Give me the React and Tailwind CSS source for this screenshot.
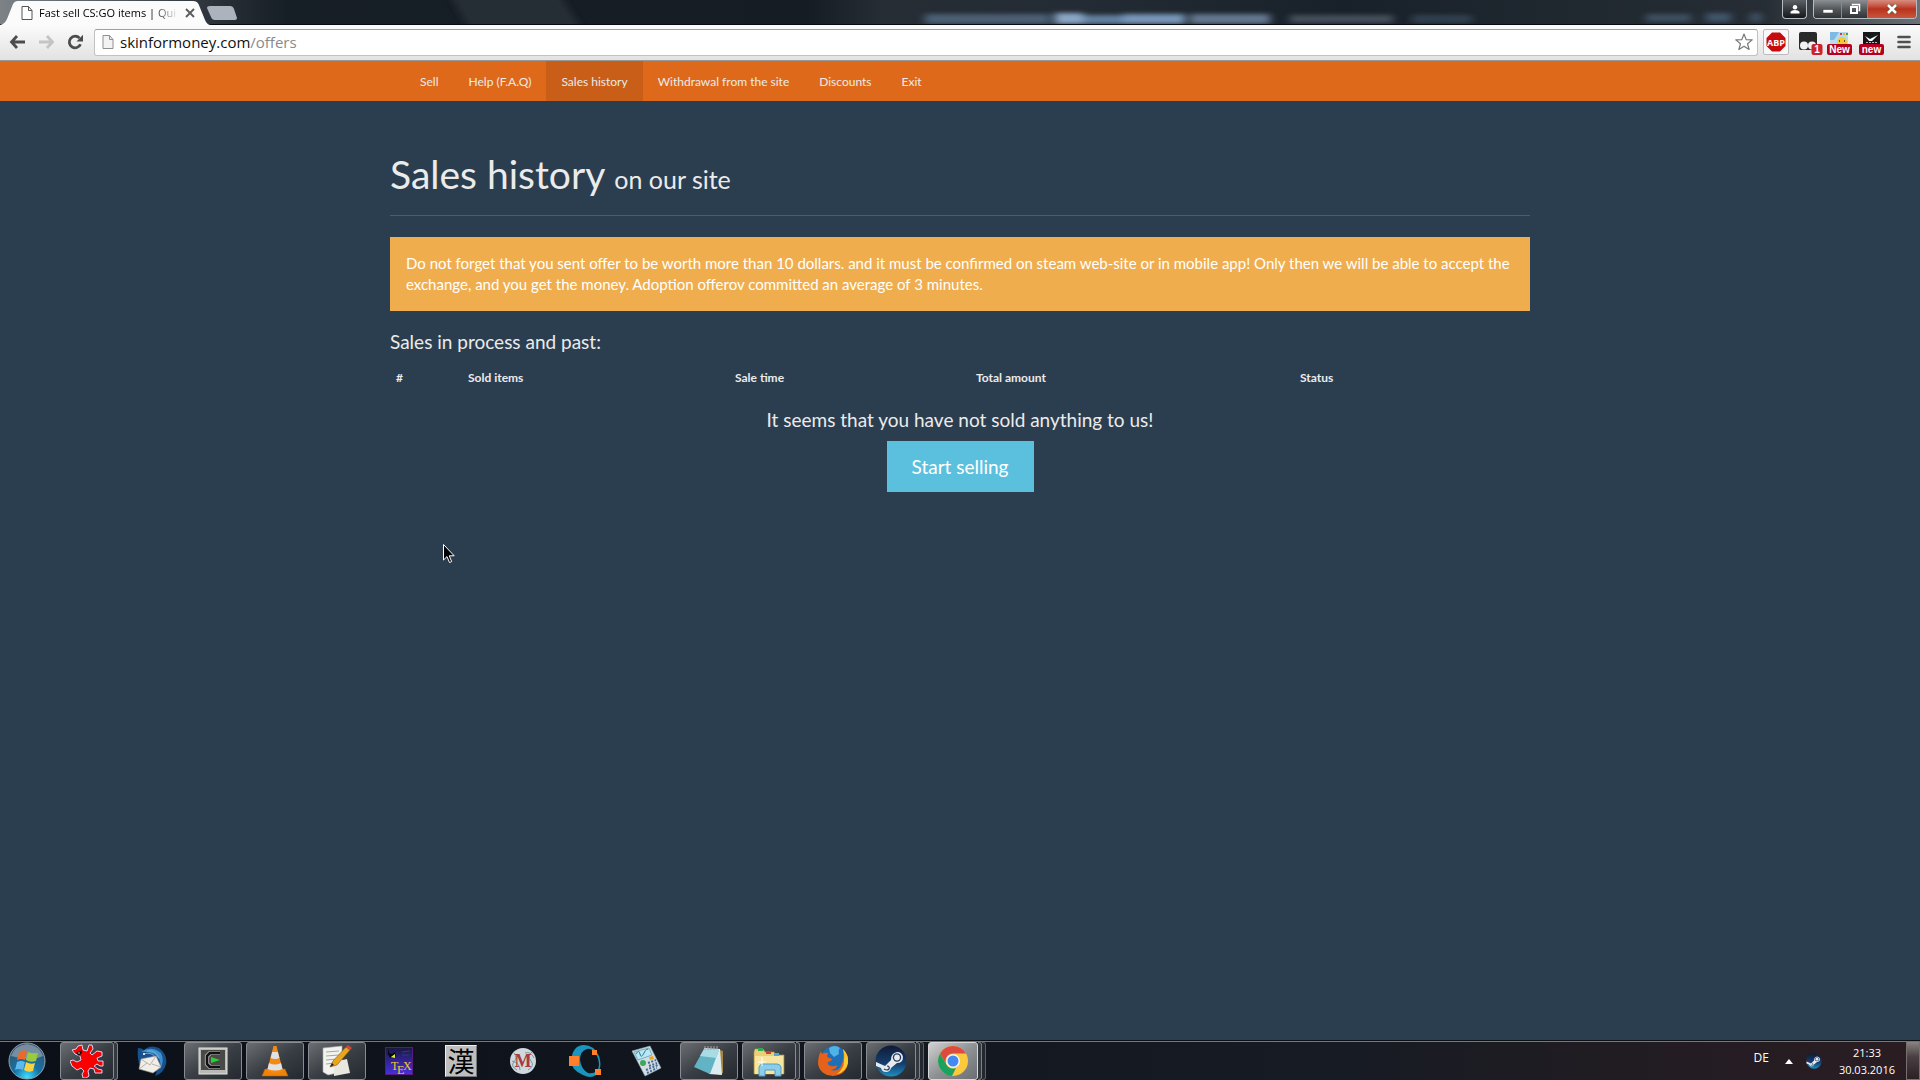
import React from 'react'

const navLinks = ['Sell', 'Help (F.A.Q)', 'Sales history', 'Withdrawal from the site', 'Discounts', 'Exit']

const columns = [
  { label: '#', width: 'w-[72px]' },
  { label: 'Sold items', width: 'w-[267px]' },
  { label: 'Sale time', width: 'w-[241px]' },
  { label: 'Total amount', width: 'w-[324px]' },
  { label: 'Status', width: '' },
]

function PageIcon({ fill = '#fff', stroke = '#555' }) {
  return (
    <svg width="12" height="16" viewBox="0 0 12 16" fill={fill} stroke={stroke} className="shrink-0">
      <path d="M1 1.5h6.5l3.5 4v9H1z" />
      <path d="M7.5 1.5v4H11" fill="none" />
    </svg>
  )
}

function WindowButtons() {
  return (
    <div className="flex h-[19px] items-start pr-[3px]">
      <button
        aria-label="User"
        className="mr-[6px] flex h-[19px] w-[25px] items-center justify-center rounded-b-[4px] border border-t-0 border-[#b4bbc1] bg-linear-to-b from-[#5c6166] to-[#16191c]"
      >
        <svg width="10" height="9" viewBox="0 0 10 9" fill="#fff">
          <circle cx="5" cy="2.3" r="2.2" />
          <path d="M0.5 8.5V6.8Q1.5 5 5 5t4.5 1.8v1.7z" />
        </svg>
      </button>
      <div className="flex h-[19px] overflow-hidden rounded-b-[4px] border border-t-0 border-[#b4bbc1]">
        <button aria-label="Minimize" className="flex w-[28px] items-center justify-center border-r border-[#858a8f] bg-linear-to-b from-[#8c9093] via-[#54585b] via-50% to-[#303437] pt-[3px]">
          <svg width="12" height="6" viewBox="0 0 12 6">
            <rect x="1" y="1.5" width="10" height="3.5" fill="#fff" stroke="#444" strokeWidth=".6" />
          </svg>
        </button>
        <button aria-label="Restore" className="flex w-[26px] items-center justify-center border-r border-[#858a8f] bg-linear-to-b from-[#8c9093] via-[#54585b] via-50% to-[#303437]">
          <svg width="12" height="12" viewBox="0 0 12 12" fill="none" stroke="#fff">
            <path d="M3.5 2.5v-1h7v6h-1" strokeWidth="1.5" />
            <rect x="2" y="4" width="6" height="6" strokeWidth="2" />
          </svg>
        </button>
        <button aria-label="Close" className="flex w-[48px] items-center justify-center bg-linear-to-b from-[#d88d80] via-[#b8321c] via-50% to-[#c9553a]">
          <svg width="12" height="10" viewBox="0 0 12 10">
            <path d="M2 1l8 8M10 1L2 9" stroke="#553" strokeWidth="4" />
            <path d="M2 1l8 8M10 1L2 9" stroke="#fff" strokeWidth="2.6" />
          </svg>
        </button>
      </div>
    </div>
  )
}

// Blurred wallpaper text that shines through the glass title bar
function GlassBackdrop() {
  return (
    <svg className="absolute inset-0 h-full w-full" preserveAspectRatio="none" viewBox="0 0 1920 25" aria-hidden="true">
      <defs>
        <filter id="soft" x="-20%" y="-80%" width="140%" height="260%">
          <feGaussianBlur stdDeviation="4 2" />
        </filter>
        <linearGradient id="glass" x1="0" x2="1" y1="0" y2="0">
          <stop offset="0" stopColor="#7d8287" />
          <stop offset=".09" stopColor="#3a4047" />
          <stop offset=".12" stopColor="#262d34" />
          <stop offset=".15" stopColor="#161e26" />
          <stop offset=".42" stopColor="#151c24" />
          <stop offset=".46" stopColor="#262d34" />
          <stop offset=".56" stopColor="#232b34" />
          <stop offset=".7" stopColor="#18212a" />
          <stop offset=".92" stopColor="#262d34" />
          <stop offset="1" stopColor="#6c7175" />
        </linearGradient>
      </defs>
      <rect width="1920" height="25" fill="url(#glass)" />
      <g filter="url(#soft)">
        <path d="M450 -5h110l22 35H470z" fill="#272e35" />
        <rect x="925" y="14" width="125" height="10" fill="#4c5f75" />
        <rect x="1055" y="13" width="28" height="11" fill="#8aa6c6" />
        <rect x="1083" y="15" width="40" height="9" fill="#6480a0" />
        <rect x="1123" y="14" width="62" height="10" fill="#7896b8" />
        <rect x="1190" y="14" width="80" height="10" fill="#64778e" />
        <rect x="1290" y="15" width="103" height="8" fill="#44505c" />
        <rect x="1412" y="15" width="60" height="8" fill="#33414f" />
        <rect x="1646" y="14" width="45" height="8" fill="#3c4f60" />
        <rect x="1706" y="13" width="25" height="9" fill="#40556a" />
        <rect x="1750" y="13" width="12" height="9" fill="#3c4f60" />
      </g>
      <rect y="24" width="1920" height="1" fill="#080b10" />
    </svg>
  )
}

function TabStrip() {
  return (
    <div className="relative flex h-[25px] justify-between bg-[#19212a]">
      <GlassBackdrop />
      <div className="relative flex">
        <svg className="absolute inset-0" width="240" height="25" viewBox="0 0 240 25">
          <path d="M0 25Q5 24 7 19L13 4Q14.500 1 18 1H193Q197 1 198.500 4L205 20Q207 25 211 25z" fill="#fbfbfb" />
          <path d="M210 6H230Q233 6 234 9L237 18Q237 20 235 20H215Q212 20 211 17L207 8Q207 6 210 6z" fill="#acb3bd" />
        </svg>
        <div className="relative flex h-[25px] items-center pl-[21px]">
          <PageIcon />
          <span className="ml-[6px] w-[140px] overflow-hidden whitespace-nowrap bg-linear-to-r from-black from-80% to-transparent bg-clip-text font-['Open_Sans',sans-serif] text-[11px] leading-[16px] text-transparent">
            Fast sell CS:GO items | Qui
          </span>
          <button aria-label="Close tab" className="ml-[6px]">
            <svg width="10" height="10" viewBox="0 0 10 10" stroke="#5a5a5a" strokeWidth="1.8">
              <path d="M1 1l8 8M9 1L1 9" />
            </svg>
          </button>
        </div>
      </div>
      <div className="relative">
        <WindowButtons />
      </div>
    </div>
  )
}

function Extensions() {
  return (
    <div className="flex items-center">
      <button aria-label="Adblock Plus" className="flex h-[26px] w-[26px] items-center justify-center rounded-[2px] border border-[#bbb] bg-[#f8f8f8]">
        <svg width="20" height="20" viewBox="0 0 20 20">
          <path d="M6 .5h8L19.500 6v8L14 19.500H6L.5 14V6z" fill="#c60a0d" />
          <text x="10" y="13.500" textAnchor="middle" fontSize="9" fontWeight="700" fill="#fff" fontFamily="Open Sans, sans-serif">ABP</text>
        </svg>
      </button>
      <button aria-label="Tampermonkey" className="ml-[8px]">
        <svg width="26" height="28" viewBox="0 0 26 28">
          <rect x="2" y="4" width="18" height="18" rx="2" fill="#2a2a2a" />
          <circle cx="7" cy="17.500" r="4" fill="#f2f2f2" />
          <circle cx="15" cy="17.500" r="4" fill="#f2f2f2" />
          <rect x="14.500" y="16" width="11" height="11" rx="2" fill="#cc2229" />
          <text x="20" y="25" textAnchor="middle" fontSize="10" fontWeight="700" fill="#fff" fontFamily="Liberation Sans, sans-serif">1</text>
        </svg>
      </button>
      <button aria-label="Market helper" className="ml-[4px]">
        <svg width="26" height="28" viewBox="0 0 26 28">
          <rect x="3" y="4" width="18" height="15" fill="#b7dcf2" />
          <path d="M3 4h9l-5 8H3z" fill="#7fb9e4" />
          <path d="M13 5h2v2h-2z" fill="#e33" />
          <path d="M16 5h2v2h-2z" fill="#f0b020" />
          <path d="M19 5h2v2h-2z" fill="#4a4" />
          <circle cx="15" cy="14" r="5" fill="#f4cb35" />
          <path d="M12 13h1M17 13h1" stroke="#333" strokeWidth="1.500" />
          <rect x="0" y="16" width="25" height="11" rx="2" fill="#b50022" />
          <text x="12.500" y="25" textAnchor="middle" fontSize="10" fontWeight="700" fill="#fff" fontFamily="Liberation Sans, sans-serif">New</text>
        </svg>
      </button>
      <button aria-label="Inventory helper" className="ml-[6px]">
        <svg width="26" height="28" viewBox="0 0 26 28">
          <rect x="4" y="4" width="17" height="16" fill="#15171a" />
          <path d="M6 8l5 3 8-4-6 6h-3z" fill="#fff" />
          <path d="M7 14.500h11" stroke="#bbb" strokeDasharray="2 1" />
          <rect x="0" y="16" width="25" height="11" rx="2" fill="#b50022" />
          <text x="12.500" y="25" textAnchor="middle" fontSize="10" fontWeight="700" fill="#fff" fontFamily="Liberation Sans, sans-serif">new</text>
        </svg>
      </button>
      <button aria-label="Menu" className="ml-[12px]">
        <svg width="14" height="14" viewBox="0 0 14 14" stroke="#505050" strokeWidth="2.6" strokeLinecap="round">
          <path d="M1.500 2h11M1.500 7h11M1.500 12h11" />
        </svg>
      </button>
    </div>
  )
}

function Toolbar() {
  return (
    <div className="flex h-[36px] items-center border-b border-[#989898] bg-linear-to-b from-[#fbfbfb] to-[#e2e2e2] px-[9px] pb-px">
      <button aria-label="Back">
        <svg width="17" height="14" viewBox="0 0 17 14" fill="none" stroke="#4c4c4c" strokeWidth="2.8">
          <path d="M8 1L2.500 7 8 13M3 7h13" />
        </svg>
      </button>
      <button aria-label="Forward" className="ml-[12px]">
        <svg width="17" height="14" viewBox="0 0 17 14" fill="none" stroke="#c4c4c4" strokeWidth="2.8">
          <path d="M9 1l5.500 6L9 13M14 7H1" />
        </svg>
      </button>
      <button aria-label="Reload" className="ml-[12px]">
        <svg width="17" height="16" viewBox="0 0 17 16">
          <path d="M12.500 4.200A5.800 5.800 0 1 0 13.500 10.200" fill="none" stroke="#4c4c4c" strokeWidth="2.8" />
          <path d="M16 .8V7.500H9.500z" fill="#4c4c4c" />
        </svg>
      </button>
      <div className="ml-[10px] flex h-[27px] flex-1 items-center rounded-[3px] border border-[#c2c2c2] border-t-[#a0a0a0] bg-white pr-[4px] pl-[7px]">
        <PageIcon fill="#f3f3f3" stroke="#909090" />
        <label htmlFor="address" className="sr-only">Address</label>
        <div className="ml-[6px] flex flex-1 items-center font-['Open_Sans',sans-serif] text-[15px] leading-[23px]">
          <input
            id="address"
            className="field-sizing-content h-[23px] bg-transparent text-[#111] outline-none"
            defaultValue="skinformoney.com"
          />
          <span className="text-[#8a8a8a]">/offers</span>
        </div>
        <button aria-label="Bookmark">
          <svg width="18" height="18" viewBox="0 0 18 18" fill="#fff" stroke="#777" strokeWidth="1.200" strokeLinejoin="round">
            <path d="M9 1l2.200 5.600 6 .3-4.700 3.800 1.600 5.800L9 13.200l-5.100 3.300 1.600-5.800L.8 6.900l6-.3z" />
          </svg>
        </button>
      </div>
      <div className="ml-[5px]">
        <Extensions />
      </div>
    </div>
  )
}

function SiteNav() {
  return (
    <nav className="bg-[#df691a]">
      <ul className="mx-auto flex max-w-[1140px] pl-[15px]">
        {navLinks.map(label => (
          <li key={label}>
            <a
              href="#"
              className={`block px-[15px] pt-[11px] pb-[9px] text-[12px] leading-[20px] ${
                label === 'Sales history' ? 'bg-[#c85e17]' : ''
              }`}
            >
              {label}
            </a>
          </li>
        ))}
      </ul>
    </nav>
  )
}

function SalesHistory() {
  return (
    <main className="mx-auto w-full max-w-[1140px] flex-1 pt-[52px]">
      <h1 className="border-b border-[#4e5d6c] pb-[14px] text-[39px] leading-[43px]">
        Sales history <small className="text-[25px]">on our site</small>
      </h1>

      <div className="mt-[21px] bg-[#f0ad4e] p-[16px] text-[15px] leading-[21px] text-white">
        Do not forget that you sent offer to be worth more than 10 dollars. and it must be confirmed on steam web-site or
        in mobile app! Only then we will be able to accept the exchange, and you get the money. Adoption offerov
        committed an average of 3 minutes.
      </div>

      <h4 className="mt-[20px] text-[19px] leading-[21px]">Sales in process and past:</h4>

      <table className="mt-[12px] w-full table-fixed text-left text-[12px] leading-[17px]">
        <thead>
          <tr>
            {columns.map(col => (
              <th key={col.label} className={`py-[5px] pl-[6px] font-bold ${col.width}`}>
                {col.label}
              </th>
            ))}
          </tr>
        </thead>
      </table>

      <div className="mt-[18px] flex flex-col items-center gap-[11px] text-[19px]">
        <h4 className="leading-[21px]">It seems that you have not sold anything to us!</h4>
        <button className="bg-[#5bc0de] px-[25px] py-[13px] leading-[25px] text-white">Start selling</button>
      </div>
    </main>
  )
}

function RedSplat() {
  return (
    <svg width="34" height="34" viewBox="0 0 34 34">
      <path
        d="M2 6l4-1 2-3 4-1 1 5 4 1 2-6h3l1 4-3 4 2 2 5-4 5 1v4l-5 2 1 3h5v5h-3l-3-2-3 2 4 3 4 1v3h-7l-1-4-4-1-2 3 1 5-3 2h-3l-1-4 2-3-3-3-4 2-5-4-2-5 3-1 4 2 4-2-1-4-5-2z"
        fill="#f80000" stroke="#d9d4f0" strokeWidth="1"
      />
      <path d="M6 9l6-3v3l-3 3z" fill="#111" />
      <path d="M8 9h2" stroke="#fff" strokeWidth=".8" />
    </svg>
  )
}

function Thunderbird() {
  return (
    <svg width="32" height="32" viewBox="0 0 32 32">
      <path d="M3 3q4 0 6 2Q15-1 24 3q9 7 7 16-2 9-11 12 2-3 1-6L4 19Q2 10 3 3z" fill="#17508c" />
      <path d="M6 7Q16 0 26 8q4 8-1 16 2-11-6-15Q12 6 6 7z" fill="#4290cb" />
      <path d="M8 9q9-3 14 5M12 6q9-1 12 7" fill="none" stroke="#7fbce4" strokeWidth=".8" />
      <path d="M6 14l15-3 5 11-8 6-14-4z" fill="#f1eee8" stroke="#9b9993" strokeWidth=".6" />
      <path d="M6 14l9 6 6-9M4 24l8-6M26 22l-9-3" fill="none" stroke="#a9a59d" strokeWidth=".8" />
      <circle cx="9" cy="9" r="1" fill="#fff" />
    </svg>
  )
}

function TerminalIcon() {
  return (
    <svg width="30" height="28" viewBox="0 0 30 28">
      <rect x="1" y="1" width="28" height="26" fill="#b9b9b5" stroke="#e5e5e0" />
      <rect x="3" y="3" width="24" height="20" fill="#494947" />
      <path d="M22 6H12L9 9v8l3 3h10" fill="none" stroke="#ddd" strokeWidth="4.2" />
      <path d="M22 6H12L9 9v8l3 3h10" fill="none" stroke="#111" strokeWidth="2.8" />
      <path d="M13 10l9 3-9 3z" fill="#27d32c" />
    </svg>
  )
}

function Vlc() {
  return (
    <svg width="28" height="32" viewBox="0 0 28 32">
      <path d="M4 24h20l3 7H1z" fill="#f08307" stroke="#b85c00" strokeWidth=".5" />
      <path d="M12.500 1h3L22 26q-8 4-16 0z" fill="#f58a12" />
      <path d="M11.200 7h5.600l1.600 6q-4 2-8.800 0zM8 18q6 3 12 0l1.500 6q-7 3-15 0z" fill="#dfe3e6" />
    </svg>
  )
}

function Notepad() {
  return (
    <svg width="32" height="32" viewBox="0 0 32 32">
      <path d="M2 3l19-2v26l-14 3-5-3z" fill="#f2f2ef" stroke="#aaa" strokeWidth=".6" />
      <path d="M5 7l13-1M5 11l13-1M5 15l11-1M5 19l9-1" stroke="#a5a5a5" />
      <path d="M13 17l13-3 3 14-16 3z" fill="#e9e8e0" />
      <path d="M9 22l3-6L25 2l4 3-13 15z" fill="#e8a51e" stroke="#8a5b12" strokeWidth=".6" />
      <path d="M25 2l2-2 4 3-2 2z" fill="#d8423a" />
      <path d="M9 22l2-4 2 2z" fill="#222" />
    </svg>
  )
}

function TexIcon() {
  return (
    <svg width="28" height="28" viewBox="0 0 28 28">
      <defs>
        <linearGradient id="tex" x2="0" y2="1">
          <stop offset="0" stopColor="#1b1742" />
          <stop offset="1" stopColor="#4630e0" />
        </linearGradient>
      </defs>
      <rect x=".5" y=".5" width="27" height="27" fill="url(#tex)" stroke="#541a82" />
      <path d="M3 1l1 5 3 1 3-2 1 5-4-1-2 2-2-4z" fill="#07070d" />
      <path d="M6 10l4-3v4z" fill="#dff23d" />
      <path d="M17 5l8-1M17 8h7" stroke="#2d3f77" />
      <g fill="#f0c83c" fontFamily="Liberation Serif, serif" fontSize="12">
        <text x="6" y="23">T</text>
        <text x="12" y="27">E</text>
        <text x="18" y="23">X</text>
      </g>
    </svg>
  )
}

function KanjiIcon() {
  return (
    <span className="flex h-[32px] w-[32px] items-center justify-center border border-t-[#eee] border-r-[#777] border-b-[#777] border-l-[#eee] bg-[#bebebe] font-['Noto_Sans_CJK_JP',sans-serif] text-[27px] leading-[30px] text-black">
      漢
    </span>
  )
}

function MIcon() {
  return (
    <svg width="28" height="28" viewBox="0 0 28 28">
      <circle cx="14" cy="14" r="13" fill="#cfd9dd" />
      <path d="M5 6q4 5 0 9t3 8M23 5q-5 4-1 9t-3 9M3 14q8 2 8 9M16 6q6-2 9 5" fill="none" stroke="#6f9aa8" />
      <text x="14" y="20" textAnchor="middle" fontFamily="Liberation Serif, serif" fontWeight="700" fontSize="18" fill="#a73b3e">M</text>
    </svg>
  )
}

function Octave() {
  return (
    <svg width="34" height="32" viewBox="0 0 34 32">
      <path
        fillRule="evenodd"
        d="M3 15Q5 0 16 0q10 0 15 11 4 12-3 19-5 4-13 0Q3 25 3 15zM12 15q1 9 8 13 5 1 9-2 4-6 0-15Q24 2 19 4q-7 2-7 11z"
        fill="#1a95bd"
      />
      <rect x="1" y="11" width="10" height="10" fill="#ff7f2a" />
      <rect x="24" y="5" width="5" height="5" fill="#ff7f2a" />
      <rect x="27" y="24" width="6" height="6" fill="#ff7f2a" />
    </svg>
  )
}

function Calculator() {
  return (
    <svg width="32" height="32" viewBox="0 0 32 32">
      <path d="M1 6L19 1l11 22-16 8z" fill="#d4dce4" stroke="#96a5b2" strokeWidth=".6" />
      <path d="M3 7l15-4 3 7-14 5z" fill="#b9e7f2" stroke="#4c9cb5" strokeWidth=".7" />
      <path d="M5 9q3-5 4 0t4-1 4-3" fill="none" stroke="#2c7c99" />
      <circle cx="12" cy="18" r="3" fill="#3fa65b" />
      <path d="M18 12l4-1 1 3-4 1z" fill="#f0a321" />
      <path d="M17 18l8-3M18 21l8-3M15 25l12-5M16 28l10-5" stroke="#466a91" strokeWidth="2" strokeDasharray="2 1.500" />
    </svg>
  )
}

function NotesIcon() {
  return (
    <svg width="32" height="32" viewBox="0 0 32 32">
      <path d="M27 5l3 1v22l-5 2z" fill="#a88443" />
      <path d="M11 3l16 1 2 26-13-1z" fill="#dcedf1" />
      <path d="M11 4l15 1-9 24-16-7z" fill="#62b4c4" />
      <path d="M11 4l15 1-3 8-16-2z" fill="#a9dbe4" />
      <path d="M12 1v4M15 1v4M18 1v4M21 1v4M24 1v4" stroke="#a6a6a6" />
    </svg>
  )
}

function Explorer() {
  return (
    <svg width="34" height="32" viewBox="0 0 34 32">
      <path d="M3 4h8l2 3h9l2 3h8v19H2V7z" fill="#e9cf76" stroke="#b3934a" strokeWidth=".6" />
      <path d="M3 11h28v18H3z" fill="#f6e5a0" />
      <path d="M6 3h5v3H6z" fill="#35a84b" />
      <path d="M14 6h5v3h-5z" fill="#cf4031" />
      <path d="M22 8h5v3h-5z" fill="#4aa9dc" />
      <path d="M7 31V22q1-3 4-3h14q3 0 4 3v9h-6v-6H13v6z" fill="#8bcdea" stroke="#4d9dc9" />
      <path d="M10 12v9M6 17h8" stroke="#fff" />
    </svg>
  )
}

function Firefox() {
  return (
    <svg width="32" height="32" viewBox="0 0 32 32">
      <circle cx="17" cy="14" r="13" fill="#1d6fb8" />
      <path d="M12 3q6-4 11 0-2 2-1 6l-5 3-4-4z" fill="#4fb3e5" />
      <path d="M26 4q6 6 5 14-2 12-15 13Q3 30 1 19 1 11 4 6l1 3q3-2 6-1l-1 4 5 2q0 2-4 3-1 3 3 4 3 1 6-1 0 4-6 5 7 2 10-4 4-8 2-17z" fill="#e6611a" />
      <path d="M26 4q6 6 5 14-2 9-11 11 7-5 7-13 1-6-1-12z" fill="#fbc92e" />
    </svg>
  )
}

function SteamIcon({ size = 32 }) {
  return (
    <svg width={size} height={size} viewBox="0 0 32 32">
      <defs>
        <linearGradient id="steam" x2="0" y2="1">
          <stop offset="0" stopColor="#101a35" />
          <stop offset=".6" stopColor="#15406f" />
          <stop offset="1" stopColor="#1c8fc4" />
        </linearGradient>
      </defs>
      <circle cx="16" cy="16" r="15.500" fill="url(#steam)" />
      <path d="M1 17l9 4 6-6q0-7 6-8 5 0 6 5 0 6-6 6l-6 5q-1 4-5 4-4 0-5-4l-5-2z" fill="#e8eaed" />
      <circle cx="22" cy="12.500" r="4.200" fill="#25385d" />
      <circle cx="22" cy="12.500" r="2.900" fill="#e8eaed" />
      <path d="M9 24q3 2 5 0 1-3-2-3" fill="none" stroke="#25385d" strokeWidth="1.200" />
    </svg>
  )
}

function Chrome() {
  return (
    <svg width="32" height="32" viewBox="0 0 32 32">
      <circle cx="16" cy="16" r="15" fill="#fbc93b" />
      <path d="M3 8.500A15 15 0 0 1 29 8.500H16a7.500 7.500 0 0 0-6.500 11.200z" fill="#dd4b3e" />
      <path d="M3 8.500l6.500 11.200A7.500 7.500 0 0 0 19 23l-4 8A15 15 0 0 1 3 8.500z" fill="#1da160" />
      <circle cx="16" cy="16" r="7" fill="#f5f5f5" />
      <circle cx="16" cy="16" r="5.500" fill="#4688f1" />
    </svg>
  )
}

const apps = [
  { name: 'Red', icon: RedSplat, running: true, stack: 1 },
  { name: 'Thunderbird', icon: Thunderbird },
  { name: 'Terminal', icon: TerminalIcon, running: true },
  { name: 'VLC', icon: Vlc, running: true },
  { name: 'Editor', icon: Notepad, running: true },
  { name: 'TeX', icon: TexIcon },
  { name: 'Kanji', icon: KanjiIcon },
  { name: 'Maxima', icon: MIcon },
  { name: 'Octave', icon: Octave },
  { name: 'Calculator', icon: Calculator },
  { name: 'Notes', icon: NotesIcon, running: true },
  { name: 'Explorer', icon: Explorer, running: true, stack: 1 },
  { name: 'Firefox', icon: Firefox, running: true },
  { name: 'Steam', icon: SteamIcon, running: true, stack: 2 },
  { name: 'Chrome', icon: Chrome, running: true, stack: 2, active: true },
]

function TaskButton({ app }) {
  const Icon = app.icon
  let look = 'border-transparent'
  if (app.running) look = 'border-[#888c90] bg-linear-to-br from-[#6b6f73] via-[#3a3f45] via-50% to-[#24292f]'
  if (app.active) look = 'border-[#d5d7d8] bg-linear-to-br from-[#d0d1d2] via-[#909395] via-50% to-[#6b6e72]'
  return (
    <div className="flex w-[58px]">
      <button aria-label={app.name} className={`flex min-w-0 flex-1 items-center justify-center rounded-[3px] border ${look}`}>
        <Icon />
      </button>
      {app.stack >= 1 && <span className="w-[4px] rounded-r-[3px] border-y border-r border-[#7c8084] bg-[#34393f]" />}
      {app.stack >= 2 && <span className="w-[4px] rounded-r-[3px] border-y border-r border-[#5c6065] bg-[#23282e]" />}
    </div>
  )
}

function Taskbar() {
  return (
    <footer className="flex h-[40px] border-t border-[#0c1118] bg-linear-to-r from-[#0b1018] via-[#171b23] via-70% to-[#2a1d22] font-['Open_Sans',sans-serif] text-white">
      <div className="flex flex-1 border-t border-[#75797e]">
        <button aria-label="Start" className="flex w-[60px] items-center pl-[8px]">
          <svg width="38" height="38" viewBox="0 0 38 38">
            <defs>
              <radialGradient id="orb" cx=".5" cy=".95" r=".9">
                <stop offset="0" stopColor="#3fe0ff" />
                <stop offset=".4" stopColor="#1473a8" />
                <stop offset="1" stopColor="#3c5064" />
              </radialGradient>
            </defs>
            <circle cx="19" cy="19" r="18" fill="url(#orb)" stroke="#8ca4b4" />
            <path d="M3 14Q7 3 19 2q12 1 16 12-8 4-16 3T3 14z" fill="#a9bccb" opacity=".55" />
            <path d="M11 10q4-3 8-1l-2 9q-4-2-8 0z" fill="#ea6a2e" />
            <path d="M20 10q4 2 10 1l-2 8q-6 2-10-1z" fill="#9bcb3c" />
            <path d="M9 20q4-2 8 0l-2 8q-4-2-8 0z" fill="#5db9ee" />
            <path d="M18 20q5 3 9 1l-2 8q-5 2-9-1z" fill="#fad140" />
          </svg>
        </button>
        <div className="flex gap-[4px]">
          {apps.map(app => (
            <TaskButton key={app.name} app={app} />
          ))}
        </div>
        <div className="ml-auto flex items-center pr-[11px]">
          <span className="mb-[6px] text-[12px] leading-[16px]">DE</span>
          <svg className="ml-[16px]" width="8" height="5" viewBox="0 0 8 5" fill="#fff">
            <path d="M4 0l4 5H0z" />
          </svg>
          <span className="ml-[13px]"><SteamIcon size={16} /></span>
          <time className="ml-[17px] text-center text-[11px] leading-[17px]">
            21:33<br />30.03.2016
          </time>
        </div>
      </div>
      <button aria-label="Show desktop" className="w-[14px] border border-[#77706f] bg-linear-to-b from-[#8a8484] via-[#4a4043] via-40% to-[#2b2125]" />
    </footer>
  )
}

function Pointer() {
  return (
    <svg className="pointer-events-none absolute top-[544px] left-[443px]" width="12" height="19" viewBox="0 0 12 19">
      <path d="M.5.500v15.500l3.500-3.400 2.500 5.900 2.200-.9-2.500-5.800h5z" fill="#000" stroke="#fff" />
    </svg>
  )
}

export default function App() {
  return (
    <div className="relative flex min-h-screen flex-col bg-[#2b3e50] font-[Lato,sans-serif] text-[#ebebeb]">
      <TabStrip />
      <Toolbar />
      <SiteNav />
      <SalesHistory />
      <Taskbar />
      <Pointer />
    </div>
  )
}
